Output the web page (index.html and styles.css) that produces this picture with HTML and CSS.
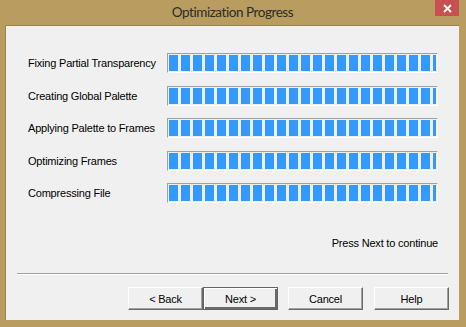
FILE: index.html
```html
<!DOCTYPE html>
<html>
<head>
<meta charset="utf-8">
<link rel="stylesheet" href="styles.css">
</head>
<body>
<div class="window">
  <div class="titlebar">
    <span class="title">Optimization Progress</span>
    <button class="close" aria-label="Close">
      <svg width="9" height="9" viewBox="0 0 9 9"><path d="M1 1 L8 8 M8 1 L1 8" stroke="#fff" stroke-width="1.9" fill="none"/></svg>
    </button>
  </div>
  <div class="client">
    <div class="rows">
      <div class="row"><span class="label">Fixing Partial Transparency</span><div class="bar"><div class="fill"></div></div></div>
      <div class="row"><span class="label">Creating Global Palette</span><div class="bar"><div class="fill"></div></div></div>
      <div class="row"><span class="label">Applying Palette to Frames</span><div class="bar"><div class="fill"></div></div></div>
      <div class="row"><span class="label">Optimizing Frames</span><div class="bar"><div class="fill"></div></div></div>
      <div class="row"><span class="label">Compressing File</span><div class="bar"><div class="fill"></div></div></div>
    </div>
    <div class="status">Press Next to continue</div>
    <div class="separator"></div>
    <div class="buttons">
      <div class="group">
        <button class="btn">&lt; Back</button>
        <button class="btn default">Next &gt;</button>
      </div>
      <button class="btn">Cancel</button>
      <button class="btn">Help</button>
    </div>
  </div>
</div>
</body>
</html>
```
FILE: styles.css
```css
html, body {
  margin: 0;
  padding: 0;
}
body {
  width: 466px;
  height: 327px;
  overflow: hidden;
  font-family: "Liberation Sans", Arial, sans-serif;
  font-size: 11px;
  letter-spacing: -0.2px;
  color: #000;
}
.window {
  width: 466px;
  height: 327px;
  box-sizing: border-box;
  background: #b99c5f;
  padding: 0 7px 7px 5px;
  display: flex;
  flex-direction: column;
}
.titlebar {
  position: relative;
  height: 25px;
  display: flex;
  align-items: center;
  justify-content: center;
}
.title {
  font-family: Lato, "Noto Sans", sans-serif;
  font-size: 13.5px;
  letter-spacing: -0.45px;
  color: #2b2b2b;
  margin-top: -1px;
  margin-left: 1px;
}
.close {
  position: absolute;
  top: 0;
  right: 0;
  width: 24px;
  height: 16px;
  border: 0;
  padding: 0;
  background: #c75050;
  display: flex;
  align-items: center;
  justify-content: center;
}
.client {
  flex: 1;
  background: #f0f0f0;
  border: 1px solid #9c8452;
  border-right: 0;
  border-bottom: 0;
  display: flex;
  flex-direction: column;
}
.rows {
  padding: 27px 0 0 22px;
  display: flex;
  flex-direction: column;
  gap: 12.5px;
}
.row {
  display: flex;
  align-items: center;
  height: 20px;
}
.label {
  width: 139px;
  white-space: nowrap;
}
.bar {
  width: 271px;
  height: 20px;
  box-sizing: border-box;
  border-top: 1px solid #a0a0a0;
  border-left: 1px solid #a0a0a0;
  border-right: 1px solid #fff;
  border-bottom: 1px solid #fff;
  padding: 1px;
  background: #f0f0f0;
}
.fill {
  height: 100%;
  background: repeating-linear-gradient(to right, #3399ff 0 9px, transparent 9px 12px);
}
.status {
  margin-top: 33px;
  line-height: 14px;
  text-align: right;
  padding-right: 21px;
}
.separator {
  margin: 23px 11px 0 11px;
  border-top: 1px solid #a0a0a0;
  border-bottom: 1px solid #fff;
}
.buttons {
  margin-top: 12px;
  display: flex;
  justify-content: flex-end;
  padding-right: 10px;
  gap: 11px;
}
.group {
  display: flex;
  margin-right: -1px;
}
.btn {
  width: 75px;
  height: 23px;
  box-sizing: border-box;
  margin: 0;
  padding: 0;
  font-family: "Liberation Sans", Arial, sans-serif;
  font-size: 11px;
  letter-spacing: -0.2px;
  color: #000;
  background: #f0f0f0;
  border-top: 1px solid #fff;
  border-left: 1px solid #fff;
  border-right: 1px solid #696969;
  border-bottom: 1px solid #696969;
  box-shadow: inset -1px -1px 0 #a0a0a0;
}
.btn.default {
  border: 1px solid #646464;
  box-shadow: inset 1px 1px 0 #fff, inset -2px -2px 0 #696969;
}
```
